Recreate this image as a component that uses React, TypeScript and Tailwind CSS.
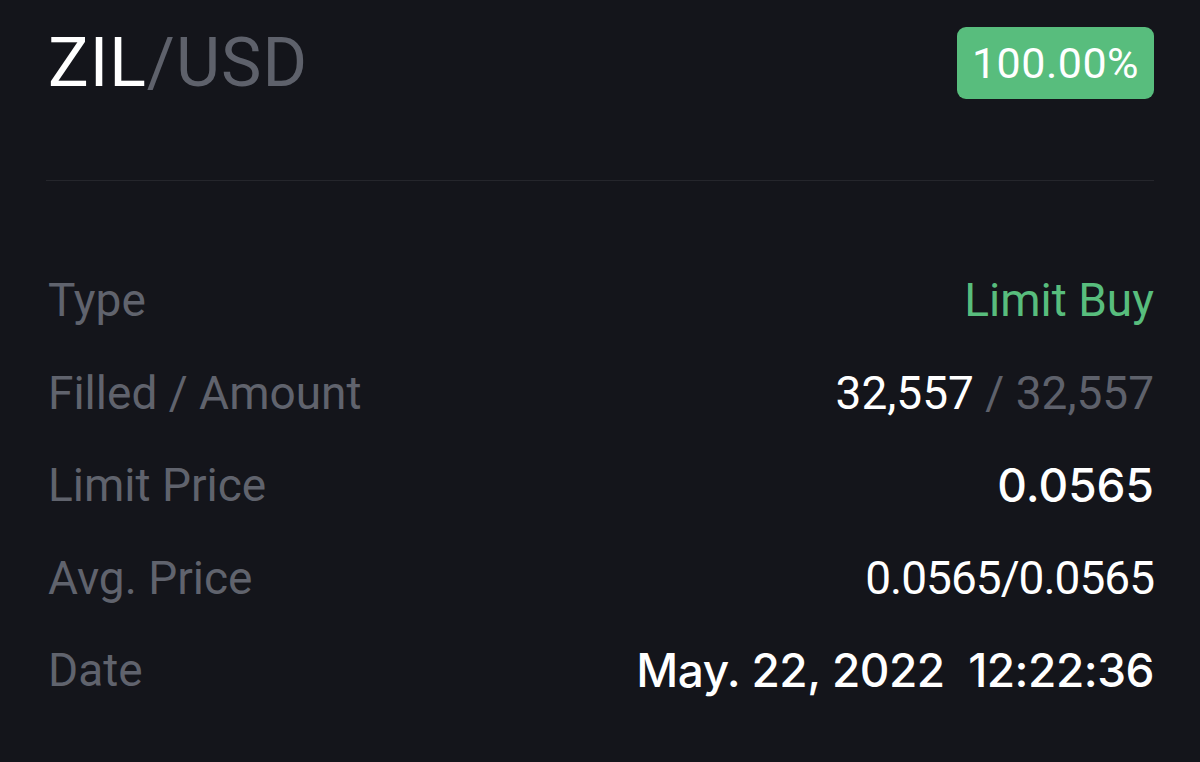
export default function App() {
  const rows: { label: string; value: React.ReactNode }[] = [
    { label: "Type", value: <span className="text-[#58bd7d]">Limit Buy</span> },
    {
      label: "Filled / Amount",
      value: (
        <span>
          32,557 <span className="text-[#5e616b]">/ 32,557</span>
        </span>
      ),
    },
    {
      label: "Limit Price",
      value: <span className="font-medium" style={{ fontFamily: "Inter, sans-serif" }}>0.0565</span>,
    },
    { label: "Avg. Price", value: <span className="tracking-[-1px]">0.0565/0.0565</span> },
    {
      label: "Date",
      value: (
        <span className="font-medium tracking-[-0.5px]" style={{ fontFamily: "Inter, sans-serif" }}>
          May. 22, 2022{"\u00a0\u00a0"}12:22:36
        </span>
      ),
    },
  ];

  return (
    <div
      className="w-[1200px] h-[762px] bg-[#14151b] px-[46px] overflow-hidden"
      style={{ fontFamily: "Roboto, 'Liberation Sans', sans-serif" }}
    >
      <div className="flex items-center justify-between pt-[27px] h-[99px]">
        <div className="text-[68px] leading-none tracking-[1px] pl-[2px]">
          <span className="text-white">ZIL</span>
          <span className="text-[#5e616b]">/USD</span>
        </div>
        <div className="h-[72px] w-[197px] rounded-[9px] bg-[#58bd7d] flex items-center justify-center text-white text-[43px] leading-none tracking-[0.5px]">
          100.00%
        </div>
      </div>

      <div className="mt-[81px] h-[1px] bg-[#25262c]" />

      <div className="mt-[73px] flex flex-col">
        {rows.map((r) => (
          <div key={r.label} className="h-[92.5px] flex items-center justify-between pl-[2px] text-[46px] leading-none">
            <span className="text-[#60636d]">{r.label}</span>
            <span className="text-white">{r.value}</span>
          </div>
        ))}
      </div>
    </div>
  );
}
